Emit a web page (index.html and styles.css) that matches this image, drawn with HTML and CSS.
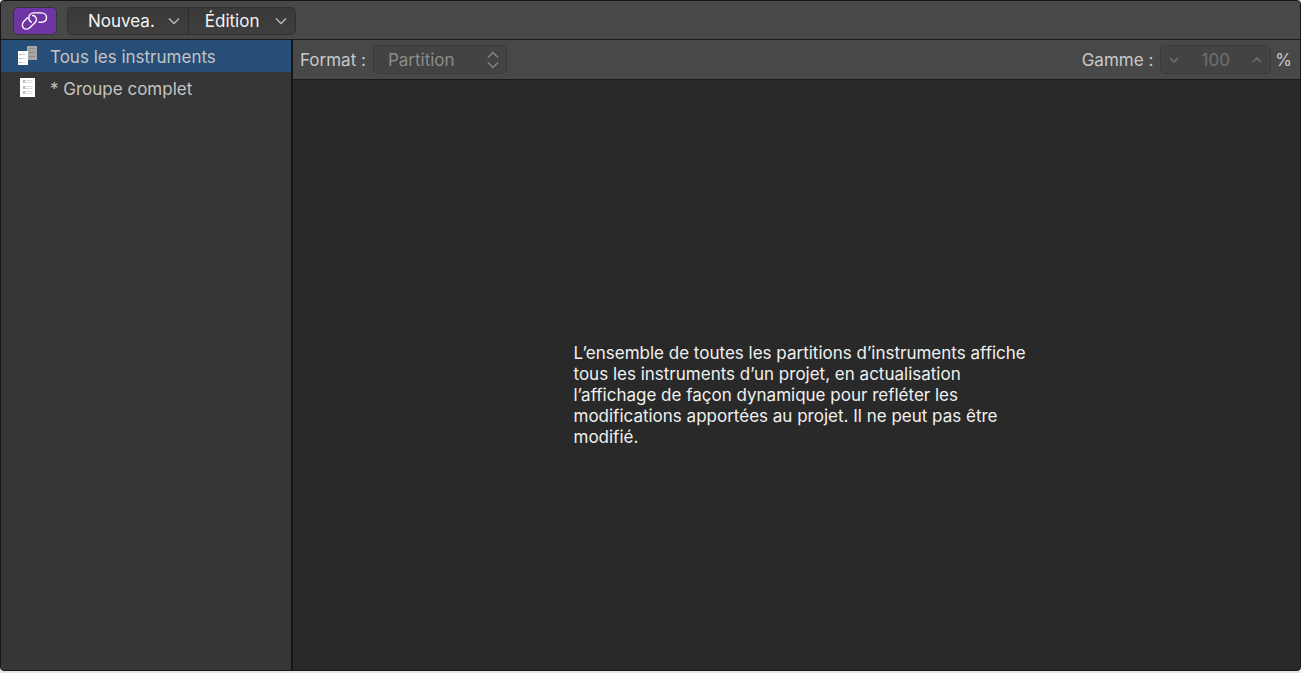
FILE: index.html
```html
<!DOCTYPE html>
<html lang="fr">
<head>
  <meta charset="UTF-8">
  <meta name="viewport" content="width=device-width, initial-scale=1.0">
  <title>Ensembles de partitions</title>
  <link rel="stylesheet" href="styles.css">
</head>
<body>
  <div class="window">
    <header class="toolbar">
      <button type="button" class="link-button" aria-label="Lien">
        <svg width="28" height="20" viewBox="0 0 28 20" fill="none" stroke="currentColor" stroke-width="1.4" stroke-linecap="round">
          <path d="M6.500 6.800L3 10.300C0.900 12.400 0.900 15.300 2.500 16.900C4.100 18.500 7 18.500 9 16.500L13.600 12C15.900 9.700 15.900 7 14.200 5.400C13.400 4.700 12.500 4.400 11.500 4.500"/>
          <path d="M10.300 11.200C8.600 10.300 7.900 8.600 7.900 6.900C7.900 4 9.900 1.900 13 1.900H20.400C23.500 1.900 25.500 4 25.500 6.600C25.500 9.300 23.500 11.300 20.400 11.300H18"/>
        </svg>
      </button>
      <div class="menus">
        <button type="button" class="menu-button">
          <span>Nouvea.</span>
          <svg class="chevron" viewBox="0 0 12 8"><path d="M1 1.500l5 5 5-5"/></svg>
        </button>
        <button type="button" class="menu-button">
          <span>Édition</span>
          <svg class="chevron" viewBox="0 0 12 8"><path d="M1 1.500l5 5 5-5"/></svg>
        </button>
      </div>
    </header>

    <div class="content">
      <nav class="sidebar">
        <ul>
          <li>
            <a href="#tous" class="score-set selected">
              <svg width="20" height="22" viewBox="0 0 20 22">
                <path fill="#a6a6a6" d="M9 0h10v14H9z"/>
                <path stroke="#8a8a8a" d="M11 2.500h6M11 6.500h6M11 10.500h6"/>
                <path fill="#fff" d="M0 5h10v14H0z"/>
                <path stroke="#aaa" d="M1 8.500h2M1 12.500h2M1 16.500h2"/>
                <path stroke="#ddd" d="M3 8.500h5M3 12.500h5M3 16.500h5"/>
              </svg>
              <span>Tous les instruments</span>
            </a>
          </li>
          <li>
            <a href="#groupe" class="score-set">
              <svg width="20" height="22" viewBox="0 0 20 22">
                <path fill="#fff" d="M2 0h15v19H2z"/>
                <path stroke="#bbb" stroke-width="3" d="M5 3.500h2M5 9.500h2M5 14.500h2"/>
                <path stroke="#ddd" d="M7 2.500h7v2H7M7 8.500h7v2H7M7 13.500h7v2H7" fill="none"/>
              </svg>
              <span>* Groupe complet</span>
            </a>
          </li>
        </ul>
      </nav>

      <main class="editor">
        <div class="options">
          <div class="option">
            <label for="format">Format :</label>
            <div class="field format-field">
              <select id="format" disabled>
                <option>Partition</option>
              </select>
              <svg width="12" height="18" viewBox="0 0 12 18"><path d="M1 6.500l5-5 5 5M1 11.500l5 5 5-5"/></svg>
            </div>
          </div>
          <div class="option">
            <label for="scale">Gamme :</label>
            <div class="field scale-field">
              <button type="button" aria-label="Diminuer" disabled>
                <svg width="10" height="6" viewBox="0 0 10 6"><path d="M1 1l4 4 4-4"/></svg>
              </button>
              <input type="text" id="scale" value="100" disabled>
              <button type="button" aria-label="Augmenter" disabled>
                <svg width="10" height="6" viewBox="0 0 10 6"><path d="M1 5l4-4 4 4"/></svg>
              </button>
            </div>
            <span>%</span>
          </div>
        </div>
        <div class="empty">
          <p>L’ensemble de toutes les partitions d’instruments affiche tous les instruments d’un projet, en actualisation l’affichage de façon dynamique pour refléter les modifications apportées au projet. Il ne peut pas être modifié.</p>
        </div>
      </main>
    </div>
  </div>
</body>
</html>
```
FILE: styles.css
```css
* {
  box-sizing: border-box;
}
body {
  margin: 0;
  background-color: #e4e4e4;
  font-family: Inter, "Liberation Sans", sans-serif;
  font-size: 17px;
  color: #c8c8c8;
}
button,
input,
select {
  font: inherit;
  color: inherit;
}
svg {
  display: block;
  flex: none;
}
.window {
  display: flex;
  flex-direction: column;
  height: calc(100vh - 2px);
  border: 1px solid #161616;
  border-radius: 4px;
  background-color: #292929;
  overflow: hidden;
}

/* toolbar */
.toolbar {
  display: flex;
  align-items: center;
  gap: 10px;
  height: 39px;
  padding: 2px 12px 0;
  background-color: #484848;
  border-bottom: 1px solid #191919;
}
.link-button {
  display: flex;
  align-items: center;
  justify-content: center;
  width: 44px;
  height: 28px;
  padding: 0;
  border: 1px solid #353535;
  border-radius: 5px;
  background-color: #6f35a5;
  color: #fff;
}
.menus {
  display: flex;
  height: 28px;
  border: 1px solid #303030;
  border-radius: 5px;
  background-color: #3b3b3b;
  overflow: hidden;
}
.menu-button {
  display: flex;
  align-items: center;
  gap: 13px;
  padding: 0 8px 0 20px;
  border: 0;
  background: linear-gradient(#393939, #3f3f3f);
  color: #f4f4f4;
}
.menu-button + .menu-button {
  gap: 16px;
  padding-left: 16px;
  border-left: 1px solid #2d2d2d;
}
.chevron {
  width: 12px;
  height: 8px;
  fill: none;
  stroke: #b8b8b8;
  stroke-width: 1.5;
}

.content {
  display: flex;
  flex: 1;
  min-height: 0;
}

/* list of score sets */
.sidebar {
  flex: none;
  width: 292px;
  background-color: #363636;
  border-right: 2px solid #161616;
}
.sidebar ul {
  margin: 0;
  padding: 0;
  list-style: none;
}
.score-set {
  display: flex;
  align-items: center;
  gap: 12px;
  height: 32px;
  padding: 2px 17px 0;
  color: #c4c4c4;
  text-decoration: none;
}
.score-set.selected {
  background-color: #274e76;
}

.editor {
  display: flex;
  flex-direction: column;
  flex: 1;
  min-width: 0;
}
.options {
  display: flex;
  align-items: center;
  justify-content: space-between;
  height: 40px;
  padding: 0 8px 0 7px;
  background-color: #484848;
  border-bottom: 1px solid #191919;
}
.option {
  display: flex;
  align-items: center;
  gap: 4px;
}
.option label {
  margin-right: 3px;
}
.field {
  display: flex;
  align-items: center;
  height: 29px;
  border: 1px solid #3b3b3b;
  border-radius: 5px;
  background-color: #434343;
}
.field svg {
  fill: none;
  stroke: #858585;
  stroke-width: 1.5;
}
.format-field {
  width: 134px;
  padding: 0 7px 0 14px;
  color: #8c8c8c;
}
.format-field select {
  flex: 1;
  min-width: 0;
  padding: 0;
  border: 0;
  background: none;
  appearance: none;
  opacity: 1;
}
.scale-field {
  width: 111px;
  color: #707070;
}
.scale-field svg {
  stroke: #707070;
}
.scale-field input {
  flex: 1;
  min-width: 0;
  padding: 0;
  border: 0;
  background: none;
  text-align: center;
}
.scale-field button {
  padding: 0 8px;
  border: 0;
  background: none;
}

.empty {
  display: flex;
  align-items: center;
  justify-content: center;
  flex: 1;
  padding: 40px 0 0 8px;
}
.empty p {
  width: 454px;
  margin: 0;
  line-height: 21px;
  color: #f0f0f0;
}
```
